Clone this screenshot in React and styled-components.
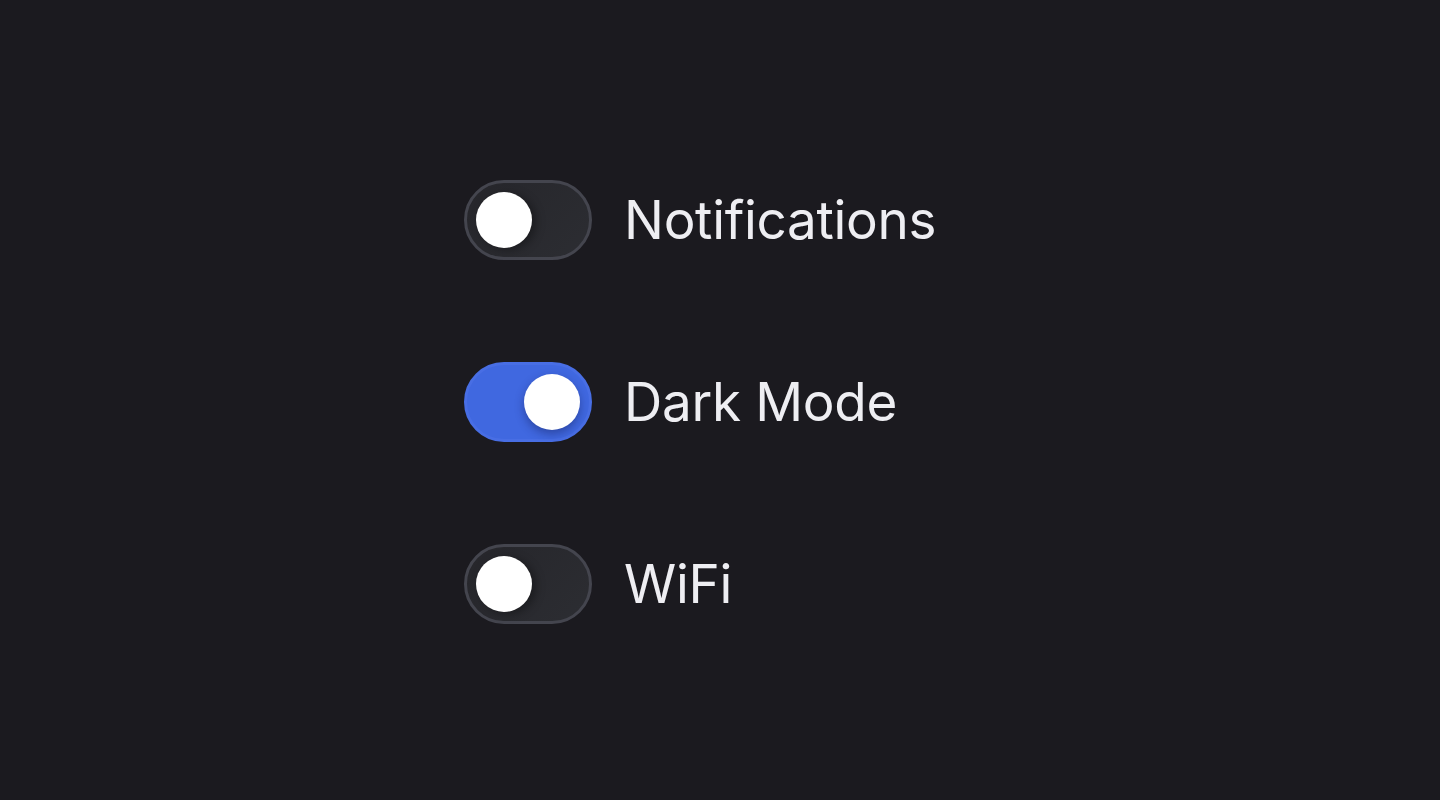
import React, { useState } from "react";
import styled, { createGlobalStyle } from "styled-components";

const GlobalStyle = createGlobalStyle`
  html, body {
    margin: 0;
    padding: 0;
    background: #1b1a1f;
  }

  body {
    font-family: "Inter", "Liberation Sans", sans-serif;
    color: #eeeef2;
  }
`;

const settings = [
  { id: "notifications", label: "Notifications", on: false },
  { id: "dark", label: "Dark Mode", on: true },
  { id: "wifi", label: "WiFi", on: false },
];

export default function App() {
  const [values, setValues] = useState(
    Object.fromEntries(settings.map((s) => [s.id, s.on]))
  );

  const flip = (id) => setValues((v) => ({ ...v, [id]: !v[id] }));

  return (
    <>
      <GlobalStyle />
      <Page>
        <List>
          {settings.map((s) => (
            <Row key={s.id} onClick={() => flip(s.id)}>
              <Track $on={values[s.id]} role="switch" aria-checked={values[s.id]}>
                <Knob $on={values[s.id]} />
              </Track>
              <Label>{s.label}</Label>
            </Row>
          ))}
        </List>
      </Page>
    </>
  );
}

const Page = styled.div`
  min-height: 100vh;
  display: flex;
  align-items: center;
  justify-content: center;
`;

const List = styled.div`
  width: 512px;
  display: flex;
  flex-direction: column;
  gap: 102px;
  margin-top: 4px;
`;

const Row = styled.label`
  display: flex;
  align-items: center;
  gap: 32px;
  cursor: pointer;
  user-select: none;
`;

const Track = styled.div`
  box-sizing: border-box;
  width: 128px;
  height: 80px;
  padding: 9px;
  border-radius: 40px;
  border: 3px solid ${(p) => (p.$on ? "#486ee4" : "#44454e")};
  background: ${(p) =>
    p.$on
      ? "#4068e0"
      : "linear-gradient(135deg, #26262b 0%, #2c2d32 100%)"};
  display: flex;
  justify-content: ${(p) => (p.$on ? "flex-end" : "flex-start")};
  flex-shrink: 0;
`;

const Knob = styled.span`
  width: 56px;
  height: 56px;
  border-radius: 50%;
  background: #ffffff;
  box-shadow: ${(p) =>
    p.$on
      ? "0 4px 10px rgba(20, 30, 90, 0.45)"
      : "4px 2px 10px rgba(0, 0, 0, 0.35)"};
`;

const Label = styled.span`
  font-size: 53px;
  font-weight: 400;
  letter-spacing: -0.3px;
  line-height: 1;
  color: #eeeef2;
`;
